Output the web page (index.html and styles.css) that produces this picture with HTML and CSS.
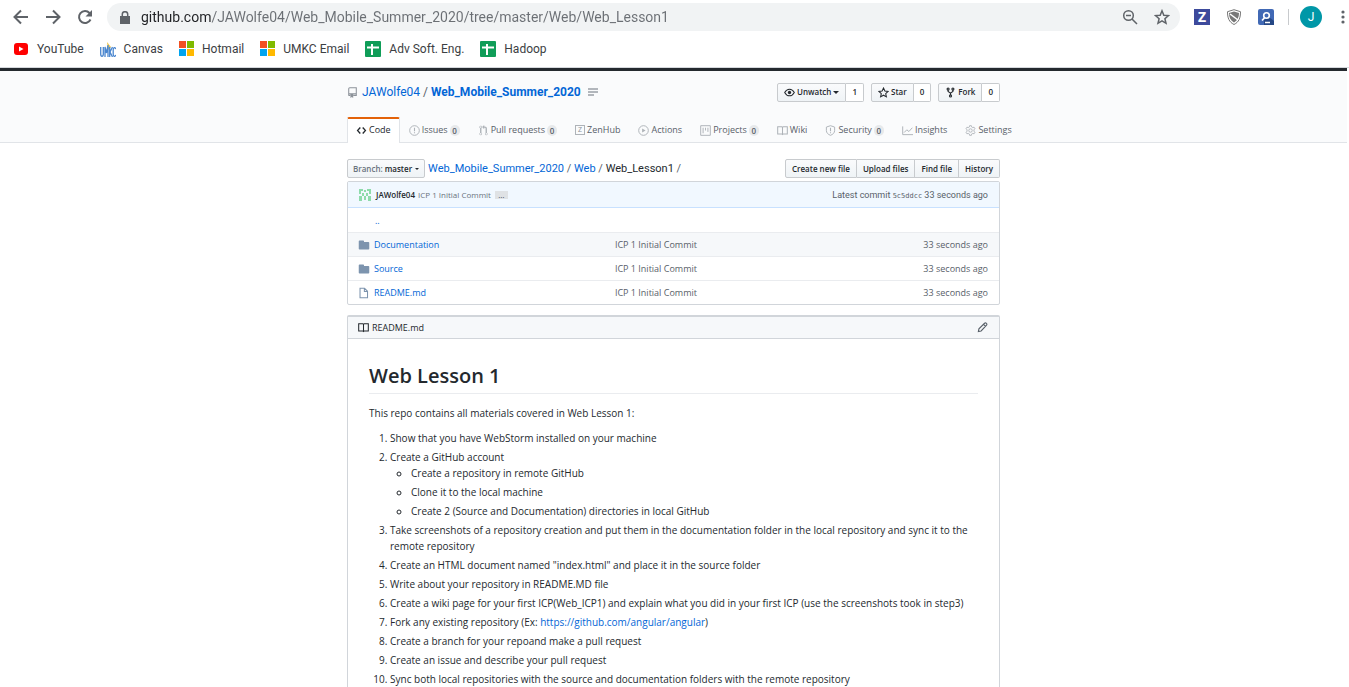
FILE: index.html
```html
<!DOCTYPE html>
<html lang="en">
<head>
<meta charset="utf-8">
<title>Web_Mobile_Summer_2020/Web/Web_Lesson1</title>
<link rel="stylesheet" href="styles.css">
</head>
<body>
<svg class="sprite" aria-hidden="true">
  <symbol id="code" viewBox="0 0 14 16"><path d="M9.5 3L8 4.5 11.5 8 8 11.5 9.5 13 14 8 9.5 3zm-5 0L0 8l4.5 5L6 11.5 2.5 8 6 4.5 4.5 3z"/></symbol>
  <symbol id="repo" viewBox="0 0 14 16"><path fill="none" stroke="currentColor" stroke-width="1.5" d="M4 12.5H2.5a1 1 0 01-1-1v-9a1.5 1.5 0 011.500-1.500h9.500v11.500H8M1.500 10h11"/><path d="M4 10h4v6l-2-1.500L4 16z"/></symbol>
  <symbol id="issue" viewBox="0 0 16 16"><circle cx="8" cy="8" r="7" fill="none" stroke="currentColor" stroke-width="1.400"/><path d="M7.200 4h1.600v5H7.200zM7.200 10.500h1.600V12H7.200z"/></symbol>
  <symbol id="pull" viewBox="0 0 12 16"><path d="M11 11.280V5c-.03-.78-.34-1.470-.94-2.060C9.460 2.350 8.780 2.030 8 2H7V0L4 3l3 3V4h1c.27.02.48.11.69.31.21.2.3.42.31.69v6.280A1.993 1.993 0 0010 15a1.993 1.993 0 001-3.720zm-1 2.920c-.66 0-1.200-.55-1.200-1.200 0-.65.55-1.200 1.200-1.200.65 0 1.200.55 1.200 1.200 0 .65-.55 1.200-1.200 1.200zM4 3c0-1.110-.89-2-2-2a1.993 1.993 0 00-1 3.720v6.560A1.993 1.993 0 002 15a1.993 1.993 0 001-3.720V4.720c.59-.34 1-.98 1-1.720zm-.8 10c0 .66-.55 1.200-1.200 1.200-.65 0-1.200-.55-1.200-1.200 0-.65.55-1.200 1.200-1.200.65 0 1.200.55 1.200 1.200zM2 4.200C1.340 4.200.8 3.650.8 3c0-.65.55-1.200 1.200-1.200.65 0 1.200.55 1.200 1.200 0 .65-.55 1.200-1.200 1.200z"/></symbol>
  <symbol id="play" viewBox="0 0 16 16"><circle cx="8" cy="8" r="7" fill="none" stroke="currentColor" stroke-width="1.400"/><path d="M6 5l5 3-5 3z"/></symbol>
  <symbol id="project" viewBox="0 0 16 16"><path fill="none" stroke="currentColor" stroke-width="1.400" d="M1 1h14v14H1zM4.500 4v8M8 4v4M11.500 4v6"/></symbol>
  <symbol id="book" viewBox="0 0 16 16"><path fill="none" stroke="currentColor" stroke-width="1.500" d="M1 2.500h6l1 1 1-1h6v10.500H9l-1 1-1-1H1zM8 3.500V14"/></symbol>
  <symbol id="shield" viewBox="0 0 16 16"><path fill="none" stroke="currentColor" stroke-width="1.400" d="M8 1l6 2v5c0 3.500-2.500 5.700-6 7-3.500-1.300-6-3.500-6-7V3z"/><path d="M7.200 4h1.600v5H7.200zM7.200 10.500h1.600V12H7.200z"/></symbol>
  <symbol id="graph" viewBox="0 0 16 16"><path fill="none" stroke="currentColor" stroke-width="1.400" d="M1 2v12h15M3 11l4-4 3 2.500L15 4"/></symbol>
  <symbol id="gear" viewBox="0 0 16 16"><g fill="none" stroke="currentColor" stroke-width="1.300"><circle cx="8" cy="8" r="2.500"/><path d="M6.700 1h2.600l.5 2 1.400.8 2-.6 1.300 2.300L13 7v2l1.500 1.500-1.300 2.300-2-.6-1.400.8-.5 2H6.700l-.5-2-1.400-.8-2 .6-1.300-2.300L3 9V7L1.500 5.500l1.300-2.300 2 .6L6.200 3z"/></g></symbol>
  <symbol id="eye" viewBox="0 0 16 16"><path fill="none" stroke="currentColor" stroke-width="1.500" d="M1 8c3.500-6.500 10.500-6.500 14 0-3.500 6.500-10.500 6.500-14 0z"/><circle cx="8" cy="8" r="2.400"/></symbol>
  <symbol id="star" viewBox="0 0 16 16"><path fill="none" stroke="currentColor" stroke-width="1.500" d="M8 1.500l2 4.400 4.700.5-3.500 3.200 1 4.700L8 11.900l-4.200 2.400 1-4.700L1.300 6.400 6 5.900z"/></symbol>
  <symbol id="fork" viewBox="0 0 12 16"><g fill="none" stroke="currentColor" stroke-width="1.600"><circle cx="2.500" cy="3" r="1.500"/><circle cx="9.500" cy="3" r="1.500"/><circle cx="6" cy="13" r="1.500"/><path d="M2.500 4.500v2L6 9l3.500-2.500v-2M6 9v2.500"/></g></symbol>
  <symbol id="folder" viewBox="0 0 14 16"><path d="M13 4H7V3c0-.66-.31-1-1-1H1c-.55 0-1 .45-1 1v10c0 .55.45 1 1 1h12c.55 0 1-.45 1-1V5c0-.55-.45-1-1-1z"/></symbol>
  <symbol id="file" viewBox="0 0 14 16"><path fill="none" stroke="currentColor" stroke-width="1.400" d="M1.700 1.700h6l4 4v8.600h-10zM7.500 2v4h4"/></symbol>
  <symbol id="pencil" viewBox="0 0 16 16"><path fill="none" stroke="currentColor" stroke-width="1.600" d="M2 14l.8-4L11 1.800c1-.8 2-.5 2.700.2s1 1.700.2 2.700L6 13zM9.500 3.500l3 3"/></symbol>
</svg>

<header class="browser">
  <div class="toolbar">
    <div class="nav">
      <button class="tool" aria-label="Back"><svg viewBox="0 0 16 16"><path d="M15 8H2M8 1.500L1.500 8 8 14.500"/></svg></button>
      <button class="tool" aria-label="Forward"><svg viewBox="0 0 16 16"><path d="M1 8h13M8 1.500L14.500 8 8 14.500"/></svg></button>
      <button class="tool" aria-label="Reload"><svg viewBox="0 0 16 16"><path d="M13.500 10.500A6 6 0 1112.500 4L14 5.500"/><path class="solid" d="M15 1v6.500H8.500z"/></svg></button>
    </div>
    <div class="omnibox">
      <svg class="lock" viewBox="0 0 10 13"><path fill="#5f6368" d="M0 5h10v8H0z"/><path fill="none" stroke="#5f6368" stroke-width="1.500" d="M2.300 5.500V3.200a2.700 2.500 0 015.400 0v2.300"/></svg>
      <input class="address" type="text" aria-label="Address" value="github.com/JAWolfe04/Web_Mobile_Summer_2020/tree/master/Web/Web_Lesson1">
      <button class="tool" aria-label="Zoom"><svg viewBox="0 0 16 16"><g stroke-width="1.500"><circle cx="6.500" cy="6.500" r="4.800"/><path d="M10 10l5 5M4 6.500h5"/></g></svg></button>
      <button class="tool" aria-label="Bookmark this page"><svg viewBox="0 0 16 16"><path stroke-width="1.500" d="M8 1.800l1.800 4.400 4.700.4-3.600 3.100 1.100 4.600L8 11.900l-4 2.400 1.100-4.600-3.600-3.100 4.700-.4z"/></svg></button>
    </div>
    <div class="extensions">
      <button class="tool z-ext" aria-label="ZenHub">Z</button>
      <button class="tool shield-ext" aria-label="Ad shield"><svg viewBox="0 0 16 16"><path stroke-width="1" stroke="#777" fill="#fff" d="M8 .7l6.500 2C14.500 9 13 13 8 15.500 3 13 1.500 9 1.500 2.700z"/><path class="shield-fill" d="M8 2.500l5 1.500c0 4.300-1.400 7.500-5 9.500-3.600-2-5-5.200-5-9.500z"/><path stroke="#fff" stroke-width="1.500" d="M4 5l8 6"/></svg></button>
      <button class="tool search-ext" aria-label="Search extension"><svg viewBox="0 0 16 16"><rect class="blue" width="16" height="16" rx="2"/><path class="navy" d="M6 11l5-3 5 4v4H6z"/><g stroke="#fff" stroke-width="1.600"><circle cx="8.500" cy="6.500" r="2.800"/><path d="M6.500 8.700L4 11.500M7 13.500h5"/></g></svg></button>
      <span class="divider"></span>
      <button class="avatar" aria-label="Profile">J</button>
      <button class="menu" aria-label="Menu"><svg viewBox="0 0 4 16"><circle cx="2" cy="3" r="1.600"/><circle cx="2" cy="8" r="1.600"/><circle cx="2" cy="13" r="1.600"/></svg></button>
    </div>
  </div>
  <nav class="bookmarks" aria-label="Bookmarks">
    <a href="#"><svg viewBox="0 0 16 16"><rect y="2" x="1" width="14" height="12" rx="3" fill="#f00"/><path fill="#fff" d="M6 5.500l4.500 2.500L6 10.500z"/></svg>YouTube</a>
    <a href="#"><svg viewBox="0 0 16 16"><path fill="#f3c84b" d="M7 1l4 5-3 3z"/><g fill="none" stroke="#4a86cf" stroke-width="1.300"><path d="M.7 6v7c0 3 2.600 3 2.600 0V6M5 16V6l1.500 6L8 4v12M9.700 6v10M12.500 6l-2.500 5 2.500 5M15.700 8c-.5-2-2.500-2-2.500 1v4c0 3 2 3 2.500 1"/></g></svg>Canvas</a>
    <a href="#"><span class="tiles"><i></i><i></i><i></i><i></i></span>Hotmail</a>
    <a href="#"><span class="tiles"><i></i><i></i><i></i><i></i></span>UMKC Email</a>
    <a href="#"><svg viewBox="0 0 16 16"><rect width="16" height="16" rx="1" fill="#0f9d58"/><path stroke="#fff" stroke-width="2" d="M2 6.500h12M7 3v11"/></svg>Adv Soft. Eng.</a>
    <a href="#"><svg viewBox="0 0 16 16"><rect width="16" height="16" rx="1" fill="#0f9d58"/><path stroke="#fff" stroke-width="2" d="M2 6.500h12M7 3v11"/></svg>Hadoop</a>
  </nav>
</header>

<div class="page">
<div class="repo-head">
  <div class="container">
    <div class="title-row">
      <h1 class="repo-title"><svg class="icon muted"><use href="#repo"/></svg><a href="#">JAWolfe04</a><span>/</span><a class="strong" href="#">Web_Mobile_Summer_2020</a><svg class="lines" viewBox="0 0 10 8"><path d="M0 1h10M0 4h10M0 7h6"/></svg></h1>
      <div class="actions">
        <div class="group"><button class="btn"><svg class="icon"><use href="#eye"/></svg>Unwatch<span class="caret"></span></button><a class="count" href="#">1</a></div>
        <div class="group"><button class="btn"><svg class="icon"><use href="#star"/></svg>Star</button><a class="count" href="#">0</a></div>
        <div class="group"><button class="btn"><svg class="icon"><use href="#fork"/></svg>Fork</button><a class="count" href="#">0</a></div>
      </div>
    </div>
    <nav class="tabs" aria-label="Repository">
      <a class="selected" href="#"><svg class="icon"><use href="#code"/></svg>Code</a>
      <a href="#"><svg class="icon"><use href="#issue"/></svg>Issues<b>0</b></a>
      <a href="#"><svg class="icon"><use href="#pull"/></svg>Pull requests<b>0</b></a>
      <a href="#"><span class="zbox">Z</span>ZenHub</a>
      <a href="#"><svg class="icon"><use href="#play"/></svg>Actions</a>
      <a href="#"><svg class="icon"><use href="#project"/></svg>Projects<b>0</b></a>
      <a href="#"><svg class="icon"><use href="#book"/></svg>Wiki</a>
      <a href="#"><svg class="icon"><use href="#shield"/></svg>Security<b>0</b></a>
      <a href="#"><svg class="icon"><use href="#graph"/></svg>Insights</a>
      <a href="#"><svg class="icon"><use href="#gear"/></svg>Settings</a>
    </nav>
  </div>
</div>

<main class="container">
  <div class="path-row">
    <div class="path">
      <button class="btn branch"><span>Branch:</span> master<i class="caret"></i></button>
      <div class="crumbs"><a href="#">Web_Mobile_Summer_2020</a> / <a href="#">Web</a> / <strong>Web_Lesson1</strong> /</div>
    </div>
    <div class="group"><button class="btn">Create new file</button><button class="btn">Upload files</button><button class="btn">Find file</button><button class="btn">History</button></div>
  </div>

  <section class="files">
    <div class="commit">
      <svg class="identicon" viewBox="0 0 12 12"><path fill="#8edbab" d="M0 0h4v2H2v3H0zM8 0h4v5h-2V2H8zM5 1h2v2H5zM3 4h2v3H3zM7 4h2v3H7zM0 7h3v5H0zM9 7h3v5H9zM5 7h2v4H5z"/></svg>
      <strong>JAWolfe04</strong><a href="#">ICP 1 Initial Commit</a><button class="more" aria-label="Show details">…</button>
      <span class="latest">Latest commit <code>5c5ddcc</code> 33 seconds ago</span>
    </div>
    <table>
      <tbody>
        <tr><td class="name up"><a href="#">..</a></td><td></td><td></td></tr>
        <tr class="hover"><td class="name"><svg class="icon"><use href="#folder"/></svg><a href="#">Documentation</a></td><td>ICP 1 Initial Commit</td><td class="age">33 seconds ago</td></tr>
        <tr><td class="name"><svg class="icon"><use href="#folder"/></svg><a href="#">Source</a></td><td>ICP 1 Initial Commit</td><td class="age">33 seconds ago</td></tr>
        <tr><td class="name"><svg class="icon"><use href="#file"/></svg><a href="#">README.md</a></td><td>ICP 1 Initial Commit</td><td class="age">33 seconds ago</td></tr>
      </tbody>
    </table>
  </section>

  <section class="readme">
    <div class="readme-head"><svg class="icon"><use href="#book"/></svg>README.md<button class="edit" aria-label="Edit README"><svg class="icon"><use href="#pencil"/></svg></button></div>
    <article class="markdown">
      <h2>Web Lesson 1</h2>
      <p>This repo contains all materials covered in Web Lesson 1:</p>
      <ol>
        <li>Show that you have WebStorm installed on your machine</li>
        <li>Create a GitHub account
          <ul>
            <li>Create a repository in remote GitHub</li>
            <li>Clone it to the local machine</li>
            <li>Create 2 (Source and Documentation) directories in local GitHub</li>
          </ul>
        </li>
        <li>Take screenshots of a repository creation and put them in the documentation folder in the local repository and sync it to the remote repository</li>
        <li>Create an HTML document named "index.html" and place it in the source folder</li>
        <li>Write about your repository in README.MD file</li>
        <li>Create a wiki page for your first ICP(Web_ICP1) and explain what you did in your first ICP (use the screenshots took in step3)</li>
        <li>Fork any existing repository (Ex: <a href="#">https://github.com/angular/angular</a>)</li>
        <li>Create a branch for your repoand make a pull request</li>
        <li>Create an issue and describe your pull request</li>
        <li>Sync both local repositories with the source and documentation folders with the remote repository</li>
      </ol>
    </article>
  </section>
</main>
</div>
</body>
</html>
```
FILE: styles.css
```css
* { box-sizing: border-box; }
html { overflow: hidden; }
body { margin: 0; background: #fff; color: #24292e; font: 10px/16px "Open Sans", "Noto Sans", sans-serif; }
a { color: #0366d6; text-decoration: none; }
button { font: inherit; color: inherit; border: 0; padding: 0; background: none; }
.sprite { display: none; }
.icon { width: 11px; height: 11px; flex: none; fill: currentColor; }

.browser { border-bottom: 1px solid #d5d8dc; color: #3c4043; }
.toolbar { display: flex; align-items: center; height: 34px; padding-left: 13px; }
.nav { display: flex; gap: 16px; margin-right: 14px; }
.tool { width: 16px; height: 16px; flex: none; }
.tool svg { display: block; width: 16px; height: 16px; fill: none; stroke: #5f6368; stroke-width: 2; }
.tool .solid { fill: #5f6368; stroke: none; }
.omnibox { display: flex; align-items: center; flex: 1; gap: 16px; height: 28px; padding: 0 10px 0 13px; border-radius: 14px; background: #f1f3f4; }
.lock { width: 10px; height: 13px; }
.address { flex: 1; min-width: 0; border: 0; padding: 0; margin-left: -5px; height: 20px; font: 14px/20px Roboto, sans-serif; color: transparent; background: linear-gradient(90deg, #202124 70px, #6b6f74 70px); background-clip: text; -webkit-background-clip: text; }
.extensions { display: flex; align-items: center; padding-left: 14px; padding-right: 4px; }
.z-ext { background: #3d4a9c; color: #fff; font-weight: 700; font-size: 14px; line-height: 16px; text-align: center; }
.shield-ext { margin-left: 16px; }
.search-ext { margin-left: 16px; }
.tool .shield-fill { fill: #777; stroke: none; }
.tool .blue { fill: #4169b5; stroke: none; }
.tool .navy { fill: #254785; stroke: none; }
.divider { width: 1px; height: 16px; margin: 0 11px 0 14px; background: #c8cacd; }
.avatar { width: 22px; height: 22px; border-radius: 50%; background: #0097a7; color: #fff; font: 12px/22px Roboto, sans-serif; }
.menu { margin-left: 19px; width: 4px; height: 16px; }
.menu svg { display: block; width: 4px; height: 16px; fill: #5f6368; }
.bookmarks { display: flex; gap: 16px; height: 33px; padding: 0 13px 4px; align-items: center; font-size: 12px; font-family: Roboto, sans-serif; }
.bookmarks a { display: flex; align-items: center; gap: 8px; color: #3c4043; white-space: nowrap; }
.bookmarks svg { width: 16px; height: 16px; }
.tiles { display: grid; grid-template-columns: 7px 7px; gap: 1px; }
.tiles i { height: 7px; background: #f25022; }
.tiles i:nth-child(2) { background: #7fba00; }
.tiles i:nth-child(3) { background: #00a4ef; }
.tiles i:nth-child(4) { background: #ffb900; }

.page { margin-right: 2px; }
.container { max-width: 653px; margin: 0 auto; }
.repo-head { border-top: 3px solid #24292e; border-bottom: 1px solid #e1e4e8; background: #fafbfc; }
.title-row { display: flex; justify-content: space-between; align-items: center; height: 42px; }
.repo-title { display: flex; align-items: center; gap: 3px; margin: 0; font: 400 12px/16px Roboto, sans-serif; color: #586069; }
.repo-title .strong { font-weight: 700; }
.muted { color: #8c9299; }
.repo-title .icon { margin-right: 1px; }
.lines { width: 10px; height: 8px; margin-left: 4px; stroke: #6a737d; fill: none; }
.actions { display: flex; gap: 7px; }
.group { display: flex; }
.btn { display: flex; align-items: center; gap: 2px; height: 19px; padding: 0 6px; border: 1px solid #c8cbce; border-radius: 2px; background: linear-gradient(#fafbfc, #eff3f6); color: #24292e; font-size: 8px; font-weight: 600; white-space: nowrap; }
.path-row .branch { padding: 0 5px; }
.group .btn { border-radius: 0; }
.group .btn:first-child { border-radius: 2px 0 0 2px; }
.group .btn + .btn { border-left: 0; }
.group .btn:last-child { border-radius: 0 2px 2px 0; }
.count { display: flex; align-items: center; padding: 0 6px; border: 1px solid #c8cbce; border-left: 0; border-radius: 0 2px 2px 0; background: #fff; color: #24292e; font-size: 8px; font-weight: 600; }
.caret { border: 3px solid transparent; border-top-color: currentColor; border-bottom: 0; }
.tabs { display: flex; margin-top: 4px; margin-bottom: -1px; height: 26px; }
.tabs a { display: flex; align-items: center; flex: none; gap: 2px; padding: 0 9px; color: #586069; font-size: 9px; }
.tabs .icon { color: #aeb3b8; }
.tabs b { min-width: 10px; height: 11px; border-radius: 6px; background: #e7e9eb; font-size: 8px; line-height: 11px; font-weight: 600; text-align: center; }
.tabs .selected { padding: 0 8px 2px; border: 1px solid #e1e4e8; border-top: 2px solid #e36209; border-bottom: 0; border-radius: 2px 2px 0 0; background: #fff; color: #24292e; }
.tabs .selected .icon { color: #24292e; }
.zbox { width: 10px; height: 10px; border: 1px solid #aeb3b8; color: #8c9299; font-size: 7px; line-height: 8px; text-align: center; }

.path-row { display: flex; justify-content: space-between; align-items: center; margin: 16px 0 3px; }
.path { display: flex; align-items: center; gap: 3px; }
.branch span { color: #6a737d; }
.branch .caret { border-width: 2px; border-bottom: 0; margin-left: 1px; }
.crumbs { font: 11px/16px Roboto, sans-serif; color: #586069; }
.crumbs strong { font-weight: 400; color: #24292e; }
.files { border: 1px solid #d1d5da; border-radius: 2px; }
.commit { display: flex; align-items: center; gap: 3px; height: 26px; padding: 0 11px; background: #f1f8ff; border-bottom: 1px solid #c8e1ff; font-size: 8px; }
.commit strong { font-weight: 600; }
.commit a { color: #6a737d; }
.identicon { width: 12px; height: 12px; margin-right: 2px; }
.more { width: 13px; height: 8px; margin-left: 1px; background: #dfe2e5; color: #444d56; line-height: 4px; }
.latest { margin-left: auto; color: #586069; font: 9px/16px Roboto, sans-serif; }
.latest code { font: 7px "DejaVu Sans Mono", monospace; }
table { width: 100%; border-collapse: collapse; table-layout: fixed; font-size: 9px; color: #586069; }
td { height: 24px; padding: 2px 0 0; border-top: 1px solid #eaecef; }
tr:first-child td { border-top: 0; }
td:first-child { width: 41%; }
.name { padding-left: 10px; }
.name .icon { width: 12px; height: 12px; vertical-align: middle; margin: -2px 4px 0 0; color: #7d94ae; }
.up { padding-left: 27px; }
.age { padding-right: 11px; text-align: right; }
.hover { background: #f6f8fa; }

.readme { margin-top: 10px; border: 1px solid #d1d5da; border-top-width: 2px; border-bottom: 0; border-radius: 2px 2px 0 0; }
.readme-head { display: flex; align-items: center; gap: 3px; height: 22px; padding: 0 11px 0 10px; background: #f6f8fa; border-bottom: 1px solid #d1d5da; font-size: 9px; }
.edit { margin-left: auto; height: 11px; color: #586069; }
.edit svg { display: block; }
.markdown { padding: 22px 21px; }
h2 { margin: 0 0 11px; padding-bottom: 2px; border-bottom: 1px solid #eaecef; font-size: 20px; line-height: 30px; font-weight: 600; }
p { margin: 0 0 9px; }
ol, ul { margin: 0; padding-left: 21px; }
li + li { margin-top: 3px; }
```
